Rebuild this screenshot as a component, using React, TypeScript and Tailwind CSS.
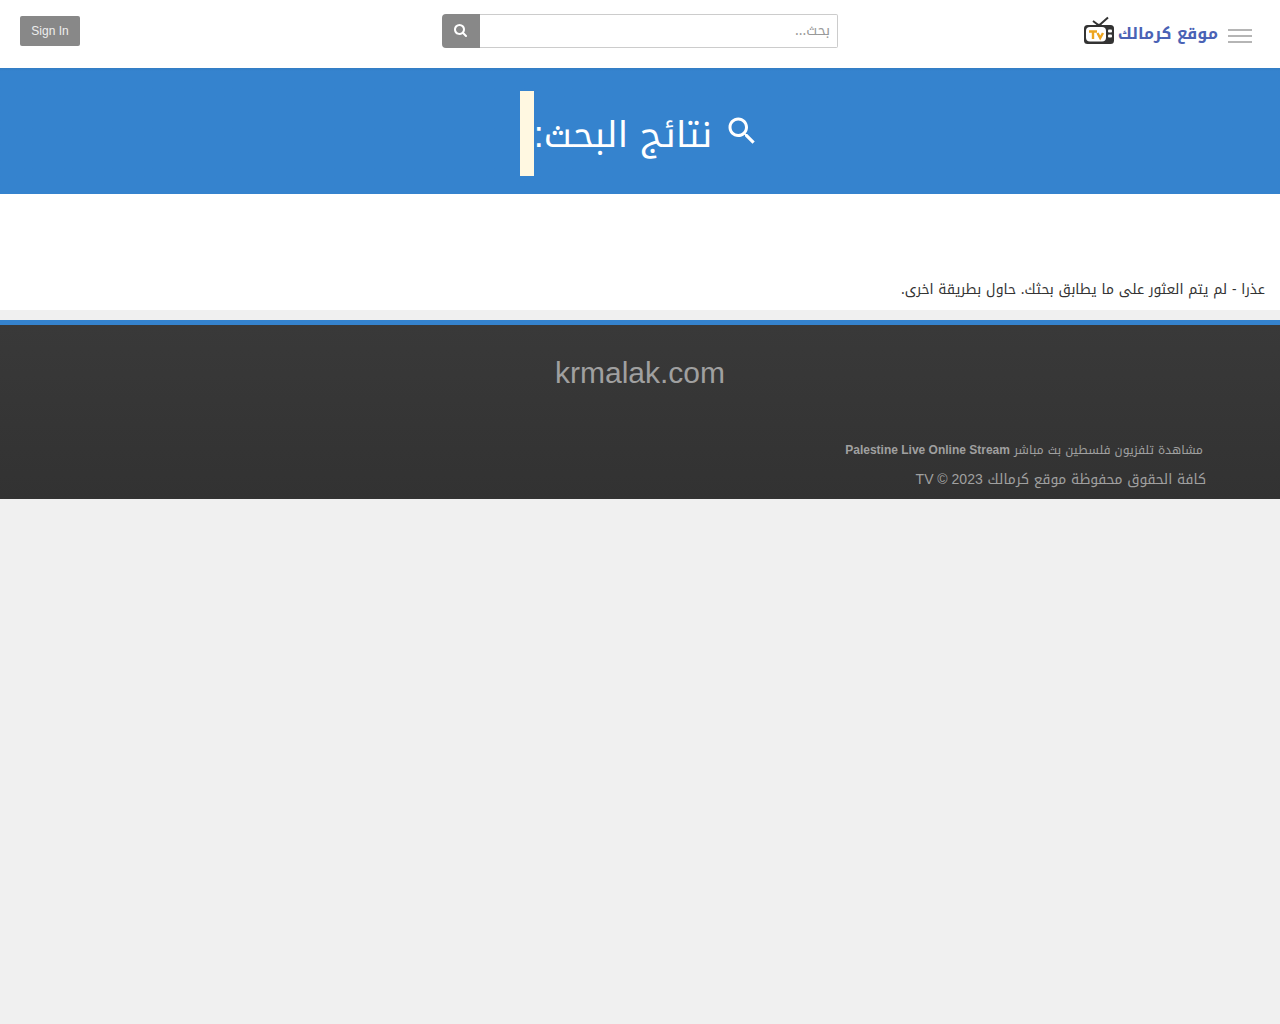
import React from "react";

function SearchGlyph() {
  return (
    <svg viewBox="0 0 1664 1792" className="mr-0.5 mb-0.5 h-[14px] w-[13px]" fill="currentColor" aria-hidden="true">
      <path d="M1152 832q0-185-131.500-316.500T704 384 387.500 515.500 256 832t131.500 316.500T704 1280t316.500-131.500T1152 832zm512 832q0 52-38 90t-90 38q-54 0-90-38l-343-342q-179 124-399 124-143 0-273.500-55.500t-225-150-150-225T0 832t55.500-273.500 150-225 225-150T704 128t273.500 55.500 225 150 150 225T1408 832q0 220-124 399l343 343q37 37 37 90z" />
    </svg>
  );
}

function TvLogo() {
  return (
    <svg viewBox="0 0 32 29" className="h-[29px] w-8" aria-hidden="true">
      <path d="M10 5 16 9.500 25 1.500" fill="none" stroke="#333" strokeWidth="2" />
      <path d="M12 10q4-4.500 8 0z" fill="#333" />
      <rect x="1" y="9" width="30" height="19" rx="3.500" fill="#333" />
      <rect x="3" y="11" width="20" height="14.500" rx="4" fill="#fff" />
      <rect x="25" y="13.500" width="4" height="3" rx="1" fill="#fff" />
      <rect x="25" y="18.500" width="4" height="3" rx="1" fill="#fff" />
      <path d="M6 15.500h8M10 15.500v7.500M14.500 17l2.700 5 2.800-5" fill="none" stroke="#eda51f" strokeWidth="2.400" />
    </svg>
  );
}

export default function App() {
  return (
    <div
      dir="rtl"
      className="min-h-screen bg-[#f0f0f0] font-['Droid_Arabic_Kufi','Noto_Kufi_Arabic','Liberation_Sans',sans-serif] text-sm text-[#333]"
    >
      <header className="grid h-[68px] grid-cols-[1fr_396px_1fr] items-start bg-white">
        <div className="flex items-start pr-7">
          <button type="button" aria-label="القائمة" className="mt-[29px] flex w-6 flex-col gap-1">
            <span className="h-0.5 w-full bg-[#b5b5b5]" />
            <span className="h-0.5 w-full bg-[#b5b5b5]" />
            <span className="h-0.5 w-full bg-[#b5b5b5]" />
          </button>
          <a href="#" className="mt-4 mr-2.5 flex items-start gap-[3px] text-[#4a62b5]">
            <span className="mt-1.5 text-base leading-6 font-bold">موقع كرمالك</span>
            <TvLogo />
          </a>
        </div>
        <form className="mt-3.5 flex h-[34px]" onSubmit={(e) => e.preventDefault()}>
          <input
            type="text"
            aria-label="بحث"
            placeholder="بحث..."
            className="min-w-0 flex-1 rounded-r-xs border border-l-0 border-[#ccc] bg-white px-[7px] text-sm outline-none placeholder:text-[#999]"
          />
          <button
            type="submit"
            aria-label="ابحث"
            className="flex w-[38px] items-center justify-center rounded-l-sm bg-[#888] text-white"
          >
            <SearchGlyph />
          </button>
        </form>
        <div className="flex justify-end pt-4 pl-5">
          <button
            type="button"
            className="h-[30px] w-[60px] rounded-[2px] bg-[#888] font-['Liberation_Sans',sans-serif] text-xs text-[#eee]"
          >
            Sign In
          </button>
        </div>
      </header>

      <main>
        <div className="flex h-[126px] justify-center bg-[#3583ce] bg-linear-to-b from-[#337dc4] to-[#3583ce] to-[3px] pt-[23px] text-white">
          <h1 className="flex h-[85px] items-center text-4xl leading-[85px]">
            <svg viewBox="0 0 24 24" className="-mt-1.5 ml-3 h-9 w-9" fill="currentColor" aria-hidden="true">
              <path d="M15.500 14h-.790l-.280-.270C15.410 12.590 16 11.110 16 9.500 16 5.910 13.090 3 9.500 3S3 5.910 3 9.500 5.910 16 9.500 16c1.610 0 3.090-.590 4.230-1.570l.270.280v.790l5 4.990L20.490 19l-4.990-5zm-6 0C7.010 14 5 11.990 5 9.500S7.010 5 9.500 5 14 7.010 14 9.500 11.990 14 9.500 14z" />
            </svg>
            <span className="pt-0.5">
              نتائج البحث<span className="font-['Liberation_Sans',sans-serif]">:</span>
            </span>
            <mark className="h-full w-3.5 bg-[#fff8e1]" />
          </h1>
        </div>
        <p className="bg-white px-[15px] pt-[86px] pb-2.5 leading-5">
          عذرا - لم يتم العثور على ما يطابق بحثك. حاول بطريقة اخرى.
        </p>
      </main>

      <footer className="mt-2.5 border-t-[5px] border-[#3583ce] bg-linear-to-b from-[#393939] to-[#323232] pt-8 pb-2.5 text-[#a0a0a0]">
        <p className="text-center font-['Liberation_Sans',sans-serif] text-[30px] leading-8">krmalak.com</p>
        <div className="mt-[51px] pr-[74px]">
          <p className="pr-[3px] text-xs leading-5">
            مشاهدة تلفزيون فلسطين بث مباشر{" "}
            <strong className="font-['Liberation_Sans',sans-serif]">Palestine Live Online Stream</strong>
          </p>
          <p className="mt-[9px] h-5 leading-5">
            كافة الحقوق محفوظة موقع كرمالك{" "}
            <span className="font-['Liberation_Sans',sans-serif]">2023 © TV</span>
          </p>
        </div>
      </footer>
    </div>
  );
}
